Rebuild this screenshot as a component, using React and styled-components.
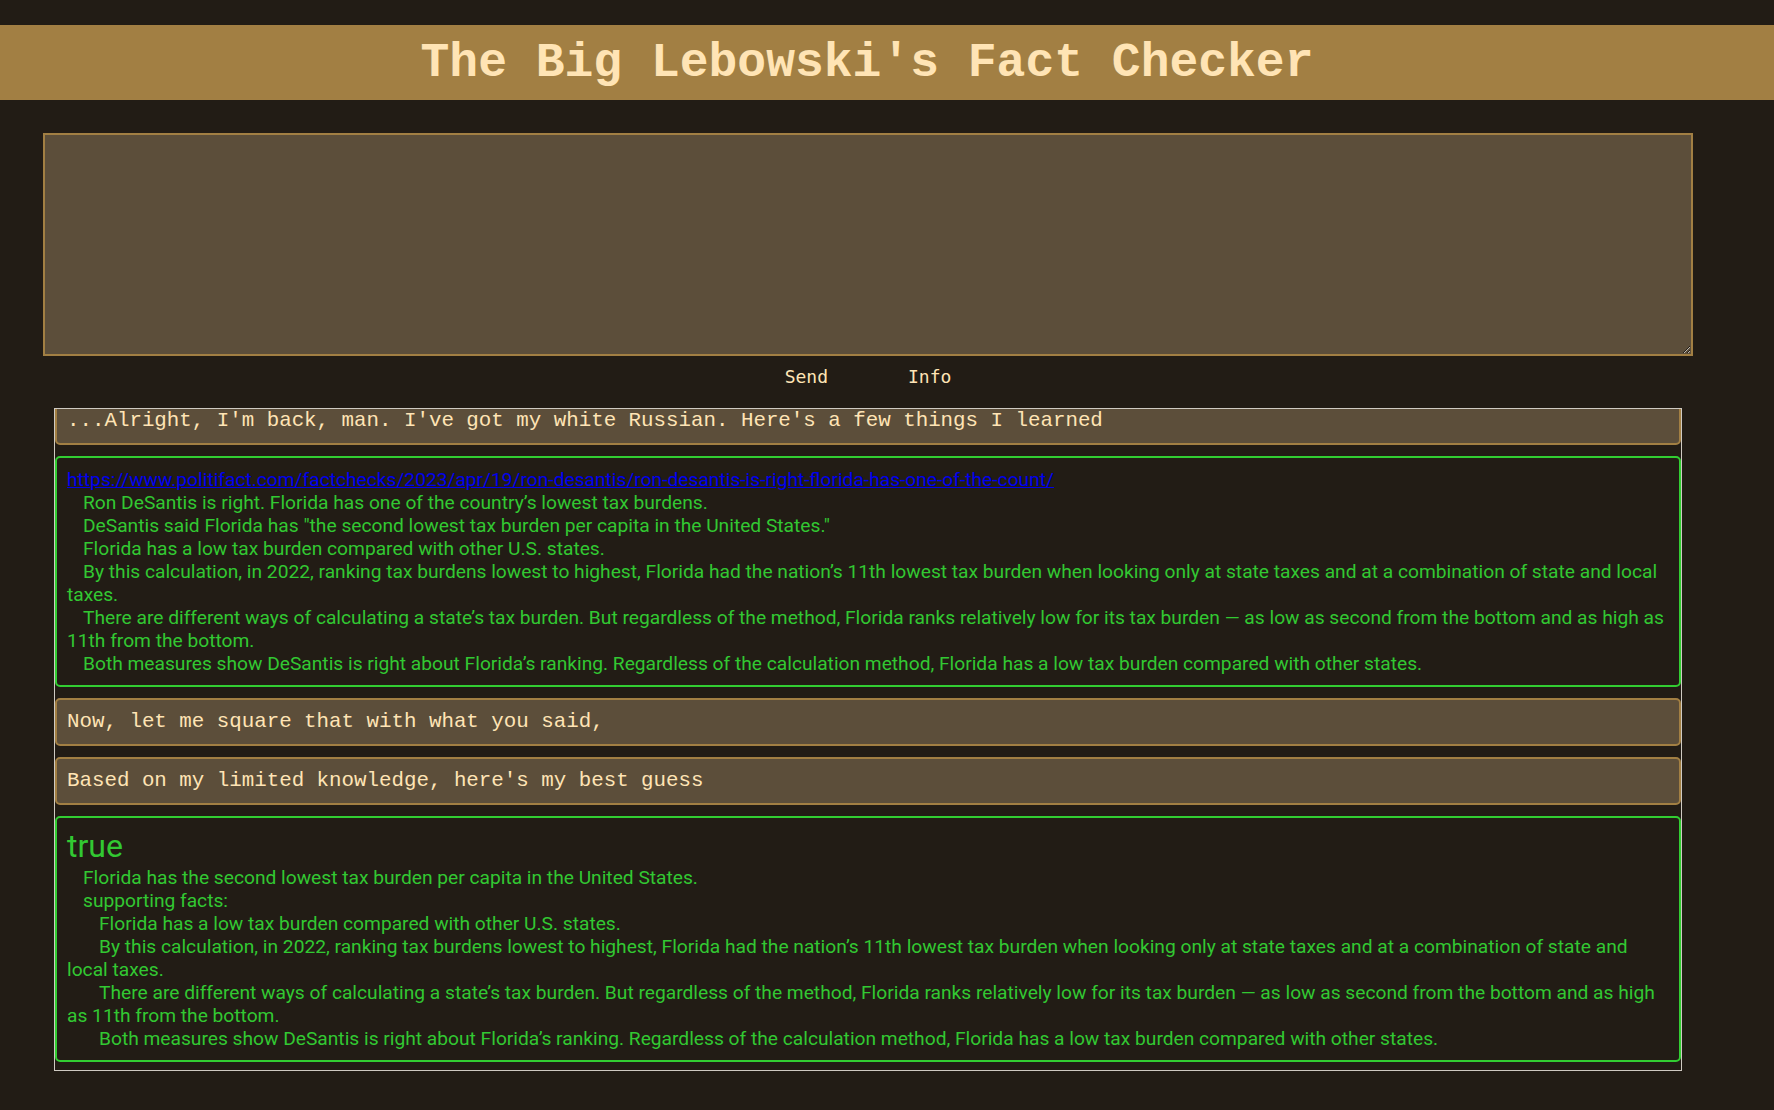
import styled, { createGlobalStyle } from "styled-components";

const GlobalStyle = createGlobalStyle`
  body {
    margin: 0;
    background: #221c15;
  }
`;

const Header = styled.header`
  margin-top: 25px;
  height: 75px;
  background: #a27f43;
  display: flex;
  align-items: center;
  justify-content: center;
  padding-right: 40px;
`;

const Title = styled.h1`
  margin: 0;
  font-family: "Liberation Mono", "Courier New", monospace;
  font-size: 48px;
  font-weight: bold;
  color: #ffe4b5;
`;

const Main = styled.main`
  margin-left: 43px;
  width: 1650px;
`;

const Prompt = styled.textarea`
  display: block;
  box-sizing: border-box;
  width: 100%;
  height: 223px;
  margin: 33px 0 0;
  border: 2px solid #a27f43;
  background: #5c4e3a;
  color: #ffe4b5;
  font-family: "Liberation Mono", monospace;
  font-size: 18px;
  outline: none;
`;

const Controls = styled.div`
  height: 52px;
  display: flex;
  justify-content: center;
  align-items: flex-start;
`;

const Button = styled.button`
  background: transparent;
  border: none;
  padding: 10px 40px;
  font-family: "DejaVu Sans Mono", monospace;
  font-size: 18px;
  line-height: 21px;
  color: #ffe4b5;
  cursor: pointer;
`;

const Feed = styled.section`
  box-sizing: border-box;
  margin-left: 11px;
  width: 1628px;
  height: 663px;
  border: 1px solid #cfcac2;
  overflow: hidden;
  display: flex;
  flex-direction: column;
  gap: 11px;
`;

const Say = styled.div`
  flex-shrink: 0;
  border: 2px solid #a27f43;
  border-radius: 5px;
  background: #5c4e3a;
  padding: 10px;
  font-family: "Liberation Mono", "Courier New", monospace;
  font-size: 20.8px;
  line-height: 24px;
  color: #ffe4b5;
  margin-top: ${(p) => (p.$scrolled ? "-12px" : "0")};
`;

const Fact = styled.div`
  flex-shrink: 0;
  border: 2px solid #32cd32;
  border-radius: 5px;
  padding: 10px;
  font-family: Roboto, "Liberation Sans", sans-serif;
  font-size: 19.2px;
  line-height: 23px;
  color: #32c832;
`;

const Source = styled.a`
  display: block;
  color: #0000ee;
  text-decoration: underline;
`;

const Verdict = styled.div`
  font-size: 32px;
  line-height: 37.5px;
`;

const Line = styled.div`
  text-indent: ${(p) => p.$level * 16}px;
`;

const sourceLines = [
  "Ron DeSantis is right. Florida has one of the country’s lowest tax burdens.",
  'DeSantis said Florida has "the second lowest tax burden per capita in the United States."',
  "Florida has a low tax burden compared with other U.S. states.",
  "By this calculation, in 2022, ranking tax burdens lowest to highest, Florida had the nation’s 11th lowest tax burden when looking only at state taxes and at a combination of state and local taxes.",
  "There are different ways of calculating a state’s tax burden. But regardless of the method, Florida ranks relatively low for its tax burden — as low as second from the bottom and as high as 11th from the bottom.",
  "Both measures show DeSantis is right about Florida’s ranking. Regardless of the calculation method, Florida has a low tax burden compared with other states.",
];

const supporting = sourceLines.slice(2);

const App = () => {
  return (
    <>
      <GlobalStyle />
      <Header>
        <Title>The Big Lebowski's Fact Checker</Title>
      </Header>
      <Main>
        <Prompt />
        <Controls>
          <Button>Send</Button>
          <Button>Info</Button>
        </Controls>
        <Feed>
          <Say $scrolled>...Alright, I'm back, man. I've got my white Russian. Here's a few things I learned</Say>
          <Fact>
            <Source href="#">https://www.politifact.com/factchecks/2023/apr/19/ron-desantis/ron-desantis-is-right-florida-has-one-of-the-count/</Source>
            {sourceLines.map((l) => (
              <Line key={l} $level={1}>{l}</Line>
            ))}
          </Fact>
          <Say>Now, let me square that with what you said,</Say>
          <Say>Based on my limited knowledge, here's my best guess</Say>
          <Fact>
            <Verdict>true</Verdict>
            <Line $level={1}>Florida has the second lowest tax burden per capita in the United States.</Line>
            <Line $level={1}>supporting facts:</Line>
            {supporting.map((l) => (
              <Line key={l} $level={2}>{l}</Line>
            ))}
          </Fact>
        </Feed>
      </Main>
    </>
  );
};

export default App;
